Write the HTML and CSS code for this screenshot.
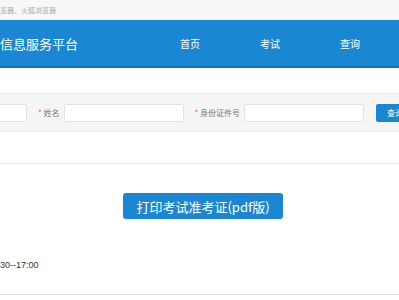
FILE: index.html
```html
<!DOCTYPE html>
<html lang="zh-CN">

<head>
    <meta charset="UTF-8">
    <title>考试信息服务平台</title>
    <link rel="stylesheet" href="styles.css">
</head>

<body>
    <div class="topbar">览器、火狐浏览器</div>

    <div class="header">
        <div class="title">信息服务平台</div>
        <div class="nav">
            <a class="nav-item">首页</a>
            <a class="nav-item">考试</a>
            <a class="nav-item">查询</a>
        </div>
    </div>

    <div class="search-band">
        <input class="field field-first" type="text">
        <label class="label"><span class="req">*</span> 姓名</label>
        <input class="field" type="text">
        <label class="label"><span class="req">*</span> 身份证件号</label>
        <input class="field" type="text">
        <button class="search-btn">查询</button>
    </div>

    <div class="divider"></div>

    <div class="print-row">
        <button class="print-btn">打印考试准考证(pdf版)</button>
    </div>

    <div class="time-text">30--17:00</div>

    <div class="footer-line"></div>
</body>

</html>
```

FILE: styles.css
```css
body {
    font-family: "Noto Sans CJK SC", "Liberation Sans", sans-serif;
    background-color: #fff;
    margin: 0;
    width: 399px;
    overflow: hidden;
}

.topbar {
    height: 20px;
    line-height: 20px;
    background-color: #f8f8f8;
    font-size: 7px;
    color: #aaa;
    white-space: nowrap;
}

.header {
    height: 46px;
    background-color: #1b87d4;
    border-bottom: 2px solid #1670b3;
    display: flex;
    align-items: center;
    color: #fff;
}

.title {
    font-size: 13px;
    width: 150px;
    white-space: nowrap;
}

.nav {
    display: flex;
}

.nav-item {
    width: 80px;
    text-align: center;
    font-size: 10px;
}

.search-band {
    margin-top: 25px;
    height: 37px;
    background-color: #f5f5f5;
    border-top: 1px solid #efefef;
    border-bottom: 1px solid #ececec;
    display: flex;
    align-items: center;
    white-space: nowrap;
}

.field {
    height: 18px;
    width: 120px;
    box-sizing: border-box;
    border: 1px solid #e2e2e2;
    border-radius: 2px;
    background-color: #fff;
    padding: 0;
    flex-shrink: 0;
}

.field-first {
    width: 27px;
    border-left: none;
    border-radius: 0 2px 2px 0;
}

.label {
    font-size: 8px;
    color: #777;
    margin: 0 4px 0 11px;
}

.req {
    color: #e8506a;
}

.search-btn {
    margin-left: 12px;
    height: 18px;
    width: 40px;
    border: none;
    border-radius: 2px;
    background-color: #1b87d4;
    color: #fff;
    font-size: 8px;
    font-family: inherit;
    text-align: left;
    padding-left: 11px;
    flex-shrink: 0;
}

.divider {
    margin-top: 31px;
    border-top: 1px solid #ececec;
}

.print-row {
    display: flex;
    justify-content: center;
    padding-left: 7px;
    margin-top: 29px;
}

.print-btn {
    width: 160px;
    height: 26px;
    border: none;
    border-radius: 3px;
    background-color: #1b87d4;
    color: #fff;
    font-size: 13px;
    font-family: "Noto Sans CJK SC", "Liberation Sans", sans-serif;
    padding: 0;
}

.time-text {
    margin-top: 41px;
    font-size: 9px;
    font-family: "Liberation Sans", sans-serif;
    color: #333;
}

.footer-line {
    margin-top: 24px;
    border-top: 1px solid #ddd;
}
```
